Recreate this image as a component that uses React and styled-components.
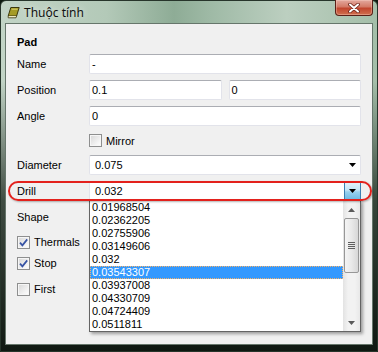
import styled, { createGlobalStyle, css } from "styled-components";

const GlobalStyle = createGlobalStyle`
    html, body {
        margin: 0;
        padding: 0;
        background: #0e1a10;
    }
    * {
        box-sizing: border-box;
    }
`;

const drillValues = [
    "0.01968504",
    "0.02362205",
    "0.02755906",
    "0.03149606",
    "0.032",
    "0.03543307",
    "0.03937008",
    "0.04330709",
    "0.04724409",
    "0.0511811",
];

/** Hộp thoại thuộc tính pad, danh sách Drill đang mở */
export default function App() {
    return (
        <>
            <GlobalStyle />
            <Window>
                <TitleBar>
                    <AppIcon />
                    <Title>Thuộc tính</Title>
                    <CloseButton>
                        <CloseGlyph />
                    </CloseButton>
                </TitleBar>
                <Client>
                    <Heading>Pad</Heading>
                    <Row $mt={5}>
                        <Label>Name</Label>
                        <Field>-</Field>
                    </Row>
                    <Row $mt={6}>
                        <Label>Position</Label>
                        <Pair>
                            <Field>0.1</Field>
                            <Field>0</Field>
                        </Pair>
                    </Row>
                    <Row $mt={6}>
                        <Label>Angle</Label>
                        <Field>0</Field>
                    </Row>
                    <Row $mt={6} $h={17}>
                        <Label />
                        <Check label="Mirror" />
                    </Row>
                    <Row $mt={6}>
                        <Label>Diameter</Label>
                        <Combo value="0.075" />
                    </Row>
                    <Row $mt={6}>
                        <Label>Drill</Label>
                        <Combo value="0.032" open />
                    </Row>
                    <Row $mt={6}>
                        <Label>Shape</Label>
                        {/* nằm dưới danh sách đang mở */}
                        <Combo value="" />
                    </Row>
                    <Row $mt={5}>
                        <Check label="Thermals" checked />
                    </Row>
                    <Row $mt={1}>
                        <Check label="Stop" checked />
                    </Row>
                    <Row $mt={6}>
                        <Check label="First" />
                    </Row>
                    <Buttons>
                        <PushButton $default />
                        <PushButton />
                        <PushButton />
                    </Buttons>
                </Client>

                <DropList>
                    <Items>
                        {drillValues.map((v, i) => (
                            <Item key={v} $selected={i === 5}>{v}</Item>
                        ))}
                    </Items>
                    <ScrollBar>
                        <ScrollArrow><Triangle up color="#5a5a5a" /></ScrollArrow>
                        <Thumb>
                            <Grip />
                        </Thumb>
                        <ScrollTrack />
                        <ScrollArrow><Triangle color="#5a5a5a" /></ScrollArrow>
                    </ScrollBar>
                </DropList>

                <Callout />
            </Window>
        </>
    );
}

function Check({ label, checked }) {
    return (
        <CheckWrap>
            <CheckBox>
                {checked && (
                    <svg width="11" height="11" viewBox="0 0 11 11">
                        <path d="M2 5.6 L4.4 8.4 L9.2 2.4" fill="none" stroke="#3753a4" strokeWidth="1.7" />
                    </svg>
                )}
            </CheckBox>
            <span>{label}</span>
        </CheckWrap>
    );
}

function Combo({ value, open }) {
    return (
        <ComboBox>
            <ComboText>{value}</ComboText>
            <ComboButton $open={open}>
                <Triangle color="#000" />
            </ComboButton>
        </ComboBox>
    );
}

function Triangle({ up, color }) {
    return (
        <svg width="7" height="4" viewBox="0 0 7 4">
            <path d={up ? "M0 4 H7 L3.5 0 Z" : "M0 0 H7 L3.5 4 Z"} fill={color} />
        </svg>
    );
}

function AppIcon() {
    return (
        <IconSvg width="13" height="13" viewBox="0 0 13 13">
            <path d="M3.8 1.5 H12.2 L9.6 10 H1.2 Z" fill="#a59b25" stroke="#3b370c" />
            <path d="M1.2 10 V11.8 H9 L9.6 10" fill="#ebe7c4" stroke="#3b370c" strokeWidth="0.8" />
            <path d="M4.6 3.2 H10.6" stroke="#ddd57a" strokeWidth="0.9" />
        </IconSvg>
    );
}

function CloseGlyph() {
    return (
        <svg width="12" height="10" viewBox="0 0 12 10">
            <path d="M2 1.5 L10 8.5 M10 1.5 L2 8.5" stroke="#6b2218" strokeWidth="3.6" strokeLinecap="round" />
            <path d="M2 1.5 L10 8.5 M10 1.5 L2 8.5" stroke="#ffffff" strokeWidth="2" strokeLinecap="round" />
        </svg>
    );
}

const uiFont = `"Liberation Sans", Arial, sans-serif`;

const Window = styled.div`
    position: relative;
    width: 378px;
    height: 352px;
    display: flex;
    flex-direction: column;
    padding: 0 4px 6px 4px;
    border: 1px solid #27352b;
    border-radius: 6px 6px 0 0;
    font-family: ${uiFont};
    font-size: 11px;
    color: #000;
    background:
        linear-gradient(180deg, rgba(8, 18, 10, 0) 0px, rgba(8, 18, 10, 0) 80px, rgba(8, 18, 10, 0.7) 200px, rgba(6, 14, 8, 0.95) 352px),
        linear-gradient(90deg, #c2d4c6 0%, #b3c9b8 28%, #8eac96 46%, #9fbaa6 56%, #bccfc0 76%, #a4bea9 100%);
`;

const TitleBar = styled.div`
    height: 22px;
    display: flex;
    align-items: center;
    padding-left: 2px;
`;

const IconSvg = styled.svg`
    flex: none;
    margin-top: 1px;
`;

const Title = styled.div`
    flex: 1;
    margin-left: 4px;
    font-family: "Noto Sans", "Liberation Sans", sans-serif;
    font-size: 12px;
    color: #111;
    text-shadow: 0 0 6px rgba(255, 255, 255, 0.7);
`;

const CloseButton = styled.div`
    align-self: flex-start;
    margin-top: -1px;
    width: 38px;
    height: 16px;
    display: flex;
    align-items: center;
    justify-content: center;
    border: 1px solid #5a1f17;
    border-top: none;
    border-radius: 0 0 4px 4px;
    background: linear-gradient(180deg, #e3a89e 0%, #d37a67 45%, #c1452e 55%, #d0704f 100%);
    box-shadow: inset 0 0 0 1px rgba(255, 220, 210, 0.35);
`;

const Client = styled.div`
    flex: 1;
    display: flex;
    flex-direction: column;
    padding: 11px 11px 0 11px;
    background: #f0f0f0;
    border: 1px solid #66766b;
`;

const Heading = styled.div`
    height: 14px;
    line-height: 14px;
    font-weight: bold;
`;

const Row = styled.div`
    display: flex;
    align-items: center;
    height: ${(p) => p.$h || 20}px;
    margin-top: ${(p) => p.$mt}px;
`;

const Label = styled.div`
    width: 72px;
    flex: none;
`;

const Pair = styled.div`
    flex: 1;
    display: flex;
    gap: 7px;
`;

const fieldBox = css`
    height: 20px;
    background: #fff;
    border: 1px solid #e2e3ea;
    border-top-color: #abadb3;
    border-radius: 2px;
`;

const Field = styled.div`
    ${fieldBox};
    flex: 1;
    line-height: 18px;
    padding-left: 2px;
`;

const ComboBox = styled.div`
    ${fieldBox};
    flex: 1;
    display: flex;
`;

const ComboText = styled.div`
    flex: 1;
    line-height: 18px;
    padding-left: 5px;
`;

const ComboButton = styled.div`
    width: 17px;
    margin: -1px -1px -1px 0;
    display: flex;
    align-items: center;
    justify-content: center;
    ${(p) => p.$open && css`
        border: 1px solid #3c7fb1;
        border-radius: 0 2px 2px 0;
        background: linear-gradient(180deg, #e5f4fc 0%, #c4e5f6 45%, #98d1ef 55%, #6cb8e3 100%);
    `}
`;

const CheckWrap = styled.div`
    display: flex;
    align-items: center;
    gap: 4px;
`;

const CheckBox = styled.div`
    width: 13px;
    height: 13px;
    display: flex;
    align-items: center;
    justify-content: center;
    border: 1px solid #8e8f8f;
    background: linear-gradient(135deg, #d6d6d6 0%, #f4f4f4 70%, #ffffff 100%);
    box-shadow: inset 0 0 0 1px #f6f6f6;
`;

const Buttons = styled.div`
    display: flex;
    justify-content: flex-end;
    gap: 8px;
    margin-top: 10px;
    margin-right: 1px;
`;

const PushButton = styled.div`
    width: 73px;
    height: 23px;
    border: 1px solid ${(p) => (p.$default ? "#3c7fb1" : "#707070")};
    border-radius: 3px;
    background: linear-gradient(180deg, #f2f2f2 0%, #ebebeb 50%, #dddddd 51%, #cfcfcf 100%);
`;

const DropList = styled.div`
    position: absolute;
    left: 88px;
    top: 199px;
    width: 272px;
    height: 132px;
    display: flex;
    background: #fff;
    border: 1px solid #646464;
    box-shadow: 2px 2px 3px rgba(0, 0, 0, 0.35);
`;

const Items = styled.div`
    flex: 1;
    display: flex;
    flex-direction: column;
`;

const Item = styled.div`
    height: 13px;
    line-height: 13px;
    padding-left: 2px;
    ${(p) => p.$selected && css`
        background: #3399ff;
        color: #fff;
        outline: 1px dotted #f6b26b;
        outline-offset: -1px;
    `}
`;

const ScrollBar = styled.div`
    width: 17px;
    display: flex;
    flex-direction: column;
    background: linear-gradient(90deg, #e3e3e3 0%, #f2f2f2 30%, #f2f2f2 70%, #e8e8e8 100%);
`;

const ScrollArrow = styled.div`
    height: 17px;
    display: flex;
    align-items: center;
    justify-content: center;
`;

const Thumb = styled.div`
    height: 55px;
    margin: 0 1px;
    display: flex;
    align-items: center;
    justify-content: center;
    border: 1px solid #979797;
    border-radius: 2px;
    background: linear-gradient(90deg, #f4f4f4 0%, #e9e9e9 50%, #d7d7d7 100%);
`;

const Grip = styled.div`
    width: 7px;
    height: 7px;
    background: repeating-linear-gradient(180deg, #5f5f5f 0 1px, transparent 1px 2px);
`;

const ScrollTrack = styled.div`
    flex: 1;
`;

const Callout = styled.div`
    position: absolute;
    left: 7px;
    top: 180px;
    width: 364px;
    height: 20px;
    border: 2px solid #e3211c;
    border-radius: 10px;
    box-shadow: 1px 1px 2px rgba(0, 0, 0, 0.3);
    pointer-events: none;
`;
